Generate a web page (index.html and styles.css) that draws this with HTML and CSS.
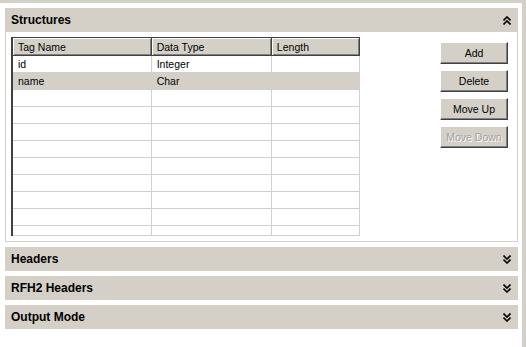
FILE: index.html
```html
<!DOCTYPE html>
<html>
<head>
    <link rel="stylesheet" href="styles.css">
</head>
<body>
    <div class="page">

        <div class="section">
            <div class="section-header">
                <span>Structures</span>
                <svg class="chevron" width="8" height="9" viewBox="0 0 8 9">
                    <path d="M0.5 4.5 L4 1 L7.5 4.5 M0.5 8.5 L4 5 L7.5 8.5" />
                </svg>
            </div>
            <div class="section-body">
                <table class="grid">
                    <thead>
                        <tr>
                            <th class="col-tag">Tag Name</th>
                            <th class="col-type">Data Type</th>
                            <th class="col-len">Length</th>
                        </tr>
                    </thead>
                    <tbody>
                        <tr><td>id</td><td>Integer</td><td></td></tr>
                        <tr class="selected"><td>name</td><td>Char</td><td></td></tr>
                        <tr><td></td><td></td><td></td></tr>
                        <tr><td></td><td></td><td></td></tr>
                        <tr><td></td><td></td><td></td></tr>
                        <tr><td></td><td></td><td></td></tr>
                        <tr><td></td><td></td><td></td></tr>
                        <tr><td></td><td></td><td></td></tr>
                        <tr><td></td><td></td><td></td></tr>
                        <tr><td></td><td></td><td></td></tr>
                        <tr class="partial"><td></td><td></td><td></td></tr>
                    </tbody>
                </table>

                <div class="buttons">
                    <button class="btn">Add</button>
                    <button class="btn">Delete</button>
                    <button class="btn">Move Up</button>
                    <button class="btn" disabled>Move Down</button>
                </div>
            </div>
        </div>

        <div class="section">
            <div class="section-header">
                <span>Headers</span>
                <svg class="chevron" width="8" height="9" viewBox="0 0 8 9">
                    <path d="M0.5 0.5 L4 4 L7.5 0.5 M0.5 4.5 L4 8 L7.5 4.5" />
                </svg>
            </div>
        </div>

        <div class="section">
            <div class="section-header">
                <span>RFH2 Headers</span>
                <svg class="chevron" width="8" height="9" viewBox="0 0 8 9">
                    <path d="M0.5 0.5 L4 4 L7.5 0.5 M0.5 4.5 L4 8 L7.5 4.5" />
                </svg>
            </div>
        </div>

        <div class="section">
            <div class="section-header">
                <span>Output Mode</span>
                <svg class="chevron" width="8" height="9" viewBox="0 0 8 9">
                    <path d="M0.5 0.5 L4 4 L7.5 0.5 M0.5 4.5 L4 8 L7.5 4.5" />
                </svg>
            </div>
        </div>

    </div>
</body>
</html>
```

FILE: styles.css
```css
* {
    margin: 0;
    padding: 0;
    box-sizing: border-box;
}

body {
    font-family: 'Liberation Sans', Arial, sans-serif;
    font-size: 10.5px;
    color: #000;
    background-color: #fff;
    width: 526px;
    height: 347px;
    overflow: hidden;
}

.page {
    width: 526px;
    height: 347px;
    border-top: 3px solid #d4d0c8;
    border-right: 4px solid #d4d0c8;
    padding: 5px 4px 0 5px;
}

.section {
    margin-bottom: 5px;
}

.section-header {
    height: 24px;
    background-color: #d4d0c8;
    display: flex;
    align-items: center;
    justify-content: space-between;
    padding: 0 7px 0 6px;
    font-weight: bold;
    font-size: 12px;
}

.chevron {
    display: block;
}

.chevron path {
    fill: none;
    stroke: #000;
    stroke-width: 1.6;
}

.section-body {
    height: 210px;
    border: 1px solid #d4d0c8;
    border-top: none;
    display: flex;
    align-items: flex-start;
    padding: 5px 0 0 5px;
}

/* Table */
.grid {
    border-collapse: collapse;
    table-layout: fixed;
    width: 349px;
    border-left: 2px solid #404040;
    border-top: 1px solid #404040;
    border-right: 1px solid #d0d0d0;
    border-bottom: 1px solid #d0d0d0;
}

.grid th {
    height: 18px;
    background-color: #d4d0c8;
    font-weight: normal;
    text-align: left;
    padding: 0 0 0 5px;
    border: 1px solid #404040;
    border-top: none;
    box-shadow: inset 1px 1px #fff, inset -1px -1px #808080;
}

.grid th.col-tag { width: 139px; border-left: none; }
.grid th.col-type { width: 120px; }
.grid th.col-len { width: 88px; }

.grid td {
    height: 17px;
    padding: 0 0 0 5px;
    border-right: 1px solid #d0d0d0;
    border-bottom: 1px solid #d0d0d0;
    white-space: nowrap;
}

.grid tr.selected td {
    background-color: #d4d0c8;
}

.grid tr.partial td {
    height: 10px;
    border-bottom: none;
}

/* Buttons */
.buttons {
    margin: 5px 9px 0 auto;
    display: flex;
    flex-direction: column;
    gap: 6px;
}

.btn {
    width: 68px;
    height: 22px;
    font-family: 'Liberation Sans', Arial, sans-serif;
    font-size: 10.5px;
    color: #000;
    background-color: #d4d0c8;
    border: 1px solid;
    border-color: #fff #404040 #404040 #fff;
    box-shadow: inset -1px -1px #808080;
}

.btn:disabled {
    color: #a0a0a0;
    text-shadow: 1px 1px #fff;
}
```
